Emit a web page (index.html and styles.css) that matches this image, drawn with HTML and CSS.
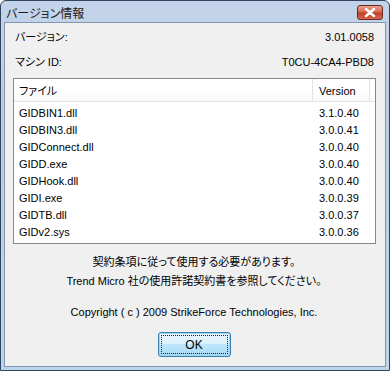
FILE: index.html
```html
<!DOCTYPE html>
<html lang="ja">
<head>
    <meta charset="UTF-8">
    <title>バージョン情報</title>
    <link rel="stylesheet" href="styles.css">
</head>
<body>
    <div class="window">
        <div class="titlebar">
            <span class="title">バージョン情報</span>
            <button class="close-btn" title="閉じる">
                <svg width="12" height="9" viewBox="0 0 12 9">
                    <path d="M2 1 L10 8 M10 1 L2 8" stroke="#fff" stroke-width="2.4" stroke-linecap="round"/>
                </svg>
            </button>
        </div>
        <div class="client">
            <div class="info-row">
                <span>バージョン:</span>
                <span>3.01.0058</span>
            </div>
            <div class="info-row">
                <span>マシン ID:</span>
                <span>T0CU-4CA4-PBD8</span>
            </div>

            <div class="list">
                <div class="list-head">
                    <span class="col-name">ファイル</span>
                    <span class="col-ver">Version</span>
                    <span class="col-fill"></span>
                </div>
                <div class="list-body" id="file-list"></div>
            </div>

            <div class="notice">
                <p>契約条項に従って使用する必要があります。</p>
                <p>Trend Micro 社の使用許諾契約書を参照してください。</p>
            </div>
            <p class="copyright">Copyright ( c ) 2009 StrikeForce Technologies, Inc.</p>
            <div class="actions">
                <button class="ok-btn">OK</button>
            </div>
        </div>
    </div>

    <script>
        const files = [
            ['GIDBIN1.dll', '3.1.0.40'],
            ['GIDBIN3.dll', '3.0.0.41'],
            ['GIDConnect.dll', '3.0.0.40'],
            ['GIDD.exe', '3.0.0.40'],
            ['GIDHook.dll', '3.0.0.40'],
            ['GIDI.exe', '3.0.0.39'],
            ['GIDTB.dll', '3.0.0.37'],
            ['GIDv2.sys', '3.0.0.36']
        ];

        const list = document.getElementById('file-list');
        files.forEach(f => {
            const row = document.createElement('div');
            row.className = 'list-row';
            row.innerHTML = '<span class="col-name">' + f[0] + '</span><span class="col-ver">' + f[1] + '</span>';
            list.appendChild(row);
        });
    </script>
</body>
</html>
```

FILE: styles.css
```css
* {
    margin: 0;
    padding: 0;
    box-sizing: border-box;
}

body {
    width: 390px;
    height: 371px;
    background: #ffffff;
    font-family: 'Liberation Sans', 'Noto Sans CJK JP', sans-serif;
    font-size: 11px;
    font-feature-settings: "palt";
    color: #000;
    overflow: hidden;
}

.window {
    width: 390px;
    height: 371px;
    display: flex;
    flex-direction: column;
    background: linear-gradient(180deg, #c3d4ea 0%, #b9cde6 30%, #bcd4ec 100%);
    border: 1px solid #33445e;
    border-radius: 6px 6px 0 0;
    padding: 0 3px 3px;
}

.titlebar {
    height: 21px;
    display: flex;
    align-items: center;
    justify-content: space-between;
    padding: 0 3px 0 2px;
}

.title {
    font-size: 12px;
    color: #1a1a1a;
    padding-top: 2px;
}

.close-btn {
    width: 26px;
    height: 15px;
    margin-top: 1px;
    border: 1px solid #6e2a22;
    border-radius: 3px;
    background: linear-gradient(180deg, #e9a28f 0%, #d46a55 45%, #c03e28 55%, #d5674e 100%);
    display: flex;
    align-items: center;
    justify-content: center;
}

.client {
    flex: 1;
    background: #f0f0f0;
    border: 1px solid #8396b0;
    padding: 6px 11px 0 9px;
    display: flex;
    flex-direction: column;
}

.info-row {
    display: flex;
    justify-content: space-between;
    height: 25px;
    line-height: 17px;
    padding-left: 1px;
}

.list {
    margin: -1px -2px 0 -1px;
    background: #fff;
    border: 1px solid #828790;
    height: 166px;
}

.list-head {
    display: flex;
    height: 23px;
    line-height: 24px;
    border-bottom: 1px solid #e5e5e5;
    background: linear-gradient(180deg, #ffffff 0%, #ffffff 60%, #f7f8fa 100%);
}

.list-head span {
    border-right: 1px solid #e3e4e6;
}

.col-name {
    width: 299px;
    padding-left: 5px;
}

.col-ver {
    width: 57px;
    padding-left: 6px;
}

.col-fill {
    flex: 1;
    border-right: none !important;
}

.list-body {
    padding-top: 3px;
}

.list-row {
    display: flex;
    height: 17px;
    line-height: 17px;
}

.notice {
    margin-top: 9px;
    text-align: center;
    line-height: 19px;
}

.copyright {
    margin-top: 12px;
    text-align: center;
    line-height: 18px;
}

.actions {
    display: flex;
    justify-content: center;
    margin-top: 11px;
}

.ok-btn {
    width: 73px;
    height: 25px;
    font-family: 'Liberation Sans', sans-serif;
    font-size: 12px;
    color: #000;
    border: 1px solid #3c7fb1;
    border-radius: 3px;
    background: linear-gradient(180deg, #eaf6fd 0%, #d9f0fc 50%, #bee6fd 50%, #a7d9f5 100%);
    outline: 1px dotted #222;
    outline-offset: -4px;
    box-shadow: inset 0 0 0 1px #9ed5f3;
}
```
